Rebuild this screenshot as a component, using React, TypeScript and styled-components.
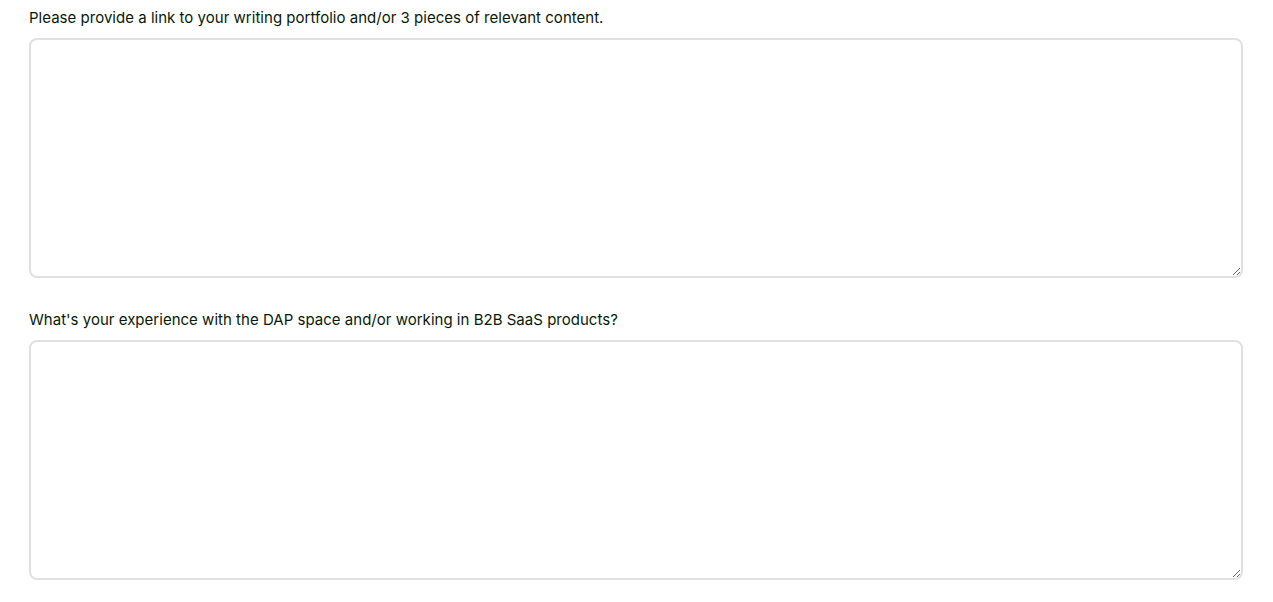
import React from "react";
import styled, { createGlobalStyle } from "styled-components";

const Global = createGlobalStyle`
  html, body { margin: 0; padding: 0; background: #ffffff; }
  body { font-family: "Inter", "Liberation Sans", Arial, sans-serif; }
`;

const Form = styled.form`
  display: flex;
  flex-direction: column;
  gap: 31px;
  padding: 7px 30px 0 29px;
  width: 1214px;
`;

const Field = styled.div`
  display: flex;
  flex-direction: column;
  gap: 9px;
`;

const Label = styled.label`
  font-family: "Inter", "Liberation Sans", Arial, sans-serif;
  font-size: 15px;
  line-height: 22px;
  color: #071a08;
  letter-spacing: 0.02px;
`;

const TextArea = styled.textarea`
  box-sizing: border-box;
  width: 1214px;
  height: 240px;
  border: 2px solid #e0e0e0;
  border-radius: 8px;
  background: #fff;
  resize: vertical;
  font-family: inherit;
  font-size: 15px;
  padding: 10px 12px;
  outline: none;
`;

const questions = [
  { id: "portfolio", label: "Please provide a link to your writing portfolio and/or 3 pieces of relevant content." },
  { id: "dap", label: "What's your experience with the DAP space and/or working in B2B SaaS products?" },
];

export default function App() {
  return (
    <>
      <Global />
      <Form>
        {questions.map((q) => (
          <Field key={q.id}>
            <Label htmlFor={q.id}>{q.label}</Label>
            <TextArea id={q.id} />
          </Field>
        ))}
      </Form>
    </>
  );
}
